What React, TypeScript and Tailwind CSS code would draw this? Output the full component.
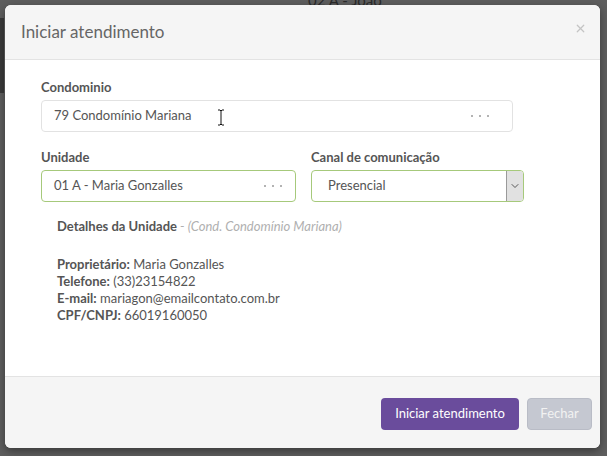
import { ChevronDown, X } from "lucide-react";

function Dots() {
  return (
    <span className="flex items-center gap-[6px]">
      <span className="h-[2px] w-[2px] rounded-full bg-[#9a9a9a]" />
      <span className="h-[2px] w-[2px] rounded-full bg-[#9a9a9a]" />
      <span className="h-[2px] w-[2px] rounded-full bg-[#9a9a9a]" />
    </span>
  );
}

export default function App() {
  return (
    <div
      className="relative h-[456px] w-[607px] overflow-hidden bg-[#5e5e5e] pl-[5px] pt-[5px]"
      style={{ fontFamily: "Lato, 'Open Sans', sans-serif" }}
    >
      <div className="absolute left-0 top-[18px] h-[75px] w-[4px] bg-[#3a3a3a]" />
      <div className="absolute left-[308px] top-[-11px] text-[15px] text-[#2a2a2a]">02 A - João</div>

      <div className="relative flex h-[443px] w-[595px] flex-col overflow-hidden rounded-[6px] bg-white shadow-[0_3px_9px_rgba(0,0,0,0.4)]">
        <div className="flex h-[55px] shrink-0 items-center justify-between border-b border-[#e3e3e3] bg-[#f5f5f5] pl-[16px] pr-[13px]">
          <h2 className="text-[17px] text-[#666]">Iniciar atendimento</h2>
          <X className="mb-[8px] h-[13px] w-[13px] text-[#c4c4c4]" strokeWidth={2.2} />
        </div>

        <div className="flex-1 px-[36px] pt-[18px] text-[13px] text-[#555]">
          <label className="block font-bold leading-[18px]">Condominio</label>
          <div className="relative mt-[4px] flex h-[32px] w-[472px] items-center justify-between rounded-[4px] border border-[#e2e2e2] pl-[12px] pr-[23px]">
            <span>79 Condomínio Mariana</span>
            <Dots />
            <svg className="absolute left-[175px] top-[8px]" width="8" height="17" viewBox="0 0 8 17">
              <path d="M1 1h2l1 1l1-1h2M4 2v13M1 16h2l1-1l1 1h2" fill="none" stroke="#111" strokeWidth="1" />
            </svg>
          </div>

          <div className="mt-[16px] grid grid-cols-[255px_213px] gap-x-[15px]">
            <div>
              <label className="block font-bold leading-[18px]">Unidade</label>
              <div className="mt-[4px] flex h-[32px] items-center justify-between rounded-[4px] border border-[#a6c97b] pl-[12px] pr-[13px]">
                <span>01 A - Maria Gonzalles</span>
                <Dots />
              </div>
            </div>
            <div>
              <label className="block font-bold leading-[18px]">Canal de comunicação</label>
              <div className="mt-[4px] flex h-[32px] items-center justify-between overflow-hidden rounded-[4px] border border-[#a6c97b]">
                <span className="pl-[16px]">Presencial</span>
                <span className="flex h-full w-[17px] items-center justify-center border-l border-[#9a9a9a] bg-[#e1e1e1]">
                  <ChevronDown className="h-[12px] w-[12px] text-[#333]" strokeWidth={1.6} />
                </span>
              </div>
            </div>
          </div>

          <div className="mt-[16px] pl-[16px] leading-[17px]">
            <p>
              <span className="font-bold">Detalhes da Unidade</span>
              <span className="italic text-[#b0b0b0]"> - (Cond. Condomínio Mariana)</span>
            </p>
            <div className="mt-[21px]">
              <p><span className="font-bold">Proprietário:</span> Maria Gonzalles</p>
              <p><span className="font-bold">Telefone:</span> (33)23154822</p>
              <p><span className="font-bold">E-mail:</span> mariagon@emailcontato.com.br</p>
              <p><span className="font-bold">CPF/CNPJ:</span> 66019160050</p>
            </div>
          </div>
        </div>

        <div className="flex h-[72px] shrink-0 items-center justify-end gap-[8px] border-t border-[#e3e3e3] bg-[#f5f5f5] pr-[8px] pt-[2px] text-[13px]">
          <button className="h-[32px] w-[138px] rounded-[4px] bg-[#6a4c9c] text-white">Iniciar atendimento</button>
          <button className="h-[32px] w-[65px] rounded-[4px] border border-[#b9bcc6] bg-[#c5c8d1] text-[#f2f2f2]">Fechar</button>
        </div>
      </div>
    </div>
  );
}
